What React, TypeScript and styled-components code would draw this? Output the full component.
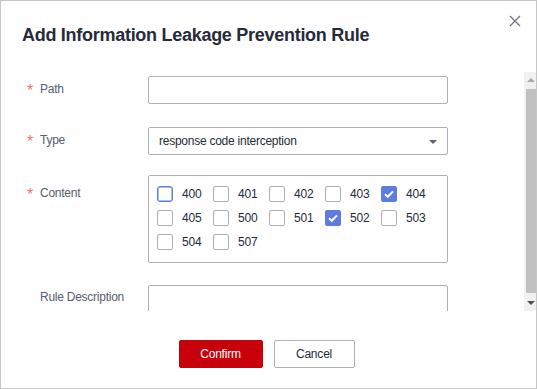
import React from 'react'
import styled, { createGlobalStyle, css } from 'styled-components'

const GlobalStyle = createGlobalStyle`
  html, body {
    margin: 0;
    padding: 0;
    background: #ffffff;
  }
  body {
    font-family: 'Liberation Sans', Arial, sans-serif;
  }
`

interface Code {
  code: string
  checked?: boolean
  focused?: boolean
}

const codes: Code[] = [
  { code: '400', focused: true },
  { code: '401' },
  { code: '402' },
  { code: '403' },
  { code: '404', checked: true },
  { code: '405' },
  { code: '500' },
  { code: '501' },
  { code: '502', checked: true },
  { code: '503' },
  { code: '504' },
  { code: '507' },
]

const CloseIcon: React.FC = () => (
  <svg width="12" height="12" viewBox="0 0 12 12">
    <path d="M1 1L11 11M11 1L1 11" stroke="#71757f" strokeWidth="1.3" fill="none" />
  </svg>
)

const CheckIcon: React.FC = () => (
  <svg width="16" height="16" viewBox="0 0 16 16">
    <path d="M4 8.2L6.8 10.8L12 5.4" stroke="#ffffff" strokeWidth="2" fill="none" />
  </svg>
)

const App: React.FC = () => {
  return (
    <>
      <GlobalStyle />
      <Dialog>
        <Header>
          <Title>Add Information Leakage Prevention Rule</Title>
          <CloseButton aria-label="close">
            <CloseIcon />
          </CloseButton>
        </Header>
        <Body>
          <Content>
            <FormRow $gap={23}>
              <Label $required>Path</Label>
              <TextInput />
            </FormRow>
            <FormRow $gap={20}>
              <Label $required>Type</Label>
              <Select>
                <span>response code interception</span>
                <Caret />
              </Select>
            </FormRow>
            <FormRow $gap={22}>
              <Label $required $shift={5}>
                Content
              </Label>
              <CheckGroup>
                {codes.map((c) => (
                  <CheckItem key={c.code}>
                    <Box $checked={c.checked} $focused={c.focused}>
                      {c.checked && <CheckIcon />}
                    </Box>
                    {c.code}
                  </CheckItem>
                ))}
              </CheckGroup>
            </FormRow>
            <FormRow $gap={0}>
              <Label $shift={-1}>Rule Description</Label>
              <TextArea />
            </FormRow>
          </Content>
          <ScrollBar>
            <ScrollArrow $dir="up" />
            <Thumb />
            <ScrollArrow $dir="down" />
          </ScrollBar>
        </Body>
        <Footer>
          <Button $primary>Confirm</Button>
          <Button>Cancel</Button>
        </Footer>
      </Dialog>
    </>
  )
}

const Dialog = styled.div`
  width: 537px;
  height: 389px;
  box-sizing: border-box;
  border: 1px solid #c6c6c6;
  background: #ffffff;
  display: flex;
  flex-flow: column;
  overflow: hidden;
`

const Header = styled.div`
  height: 71px;
  flex-shrink: 0;
  display: flex;
  align-items: flex-start;
  justify-content: space-between;
  padding: 14px 15px 0 21px;
  box-sizing: border-box;
`

const Title = styled.h2`
  margin: 8px 0 0;
  font-size: 18px;
  line-height: 24px;
  font-weight: bold;
  letter-spacing: -0.28px;
  color: #252b3a;
`

const CloseButton = styled.button`
  border: none;
  background: none;
  padding: 0;
  width: 12px;
  height: 12px;
  display: flex;
  cursor: pointer;
`

const Body = styled.div`
  height: 239px;
  flex-shrink: 0;
  display: flex;
`

const Content = styled.div`
  flex: 1;
  overflow: hidden;
  padding: 4px 0 0 25px;
  box-sizing: border-box;
`

const ScrollBar = styled.div`
  width: 12px;
  flex-shrink: 0;
  display: flex;
  flex-flow: column;
  background: #f1f1f1;
`

const ScrollArrow = styled.div<{ $dir: 'up' | 'down' }>`
  height: 17px;
  flex-shrink: 0;
  display: flex;
  align-items: center;
  justify-content: center;
  padding-left: 1px;

  &::after {
    content: '';
    width: 0;
    height: 0;
    border-left: 4px solid transparent;
    border-right: 4px solid transparent;
    ${({ $dir }) =>
      $dir === 'up'
        ? css`
            border-bottom: 4px solid #a8a8a8;
            margin-top: -2px;
          `
        : css`
            border-top: 4px solid #505050;
            margin-top: 1px;
          `}
  }
`

const Thumb = styled.div`
  flex: 1;
  margin: 0 0 1px 2px;
  background: #c1c1c1;
`

const FormRow = styled.div<{ $gap: number }>`
  display: grid;
  grid-template-columns: 122px 300px;
  align-items: start;
  margin-bottom: ${({ $gap }) => $gap}px;
`

const Label = styled.label<{ $required?: boolean; $shift?: number }>`
  display: flex;
  align-items: center;
  font-size: 12px;
  line-height: 26px;
  letter-spacing: -0.25px;
  color: #575d6c;
  margin-top: ${({ $shift }) => $shift ?? 0}px;

  &::before {
    content: '${({ $required }) => ($required ? '*' : '')}';
    width: 14px;
    padding-left: 1px;
    box-sizing: border-box;
    font-size: 16px;
    line-height: 16px;
    padding-top: 3px;
    color: #f66f6a;
  }
`

const fieldBase = css`
  width: 300px;
  box-sizing: border-box;
  border: 1px solid #adb0b8;
  border-radius: 2px;
  background: #ffffff;
`

const TextInput = styled.div`
  ${fieldBase};
  height: 28px;
`

const Select = styled.div`
  ${fieldBase};
  height: 28px;
  display: flex;
  align-items: center;
  justify-content: space-between;
  padding: 0 10px;
  font-size: 12px;
  letter-spacing: -0.25px;
  color: #252b3a;
`

const Caret = styled.span`
  width: 0;
  height: 0;
  border-left: 4px solid transparent;
  border-right: 4px solid transparent;
  border-top: 4px solid #5e6170;
  margin-top: 1px;
`

const CheckGroup = styled.div`
  ${fieldBase};
  height: 88px;
  padding: 10px 0 0 8px;
  display: grid;
  grid-template-columns: repeat(5, 56px);
  grid-auto-rows: 16px;
  row-gap: 8px;
`

const CheckItem = styled.div`
  display: flex;
  align-items: center;
  gap: 9px;
  font-size: 12px;
  letter-spacing: -0.2px;
  color: #252b3a;
`

const Box = styled.span<{ $checked?: boolean; $focused?: boolean }>`
  width: 16px;
  height: 16px;
  box-sizing: border-box;
  border-radius: 2px;
  display: flex;
  border: 1px solid ${({ $checked, $focused }) => ($checked || $focused ? '#5e7ce0' : '#adb0b8')};
  background: ${({ $checked }) => ($checked ? '#5e7ce0' : '#ffffff')};
  ${({ $focused }) =>
    $focused &&
    css`
      box-shadow: inset 0 0 0 0.5px #5e7ce0;
      border-radius: 3px;
    `}
  svg {
    margin: -1px;
  }
`

const TextArea = styled.div`
  ${fieldBase};
  height: 32px;
`

const Footer = styled.div`
  flex: 1;
  display: flex;
  justify-content: center;
  gap: 11px;
  padding: 29px 4px 0 0;
  box-sizing: border-box;
`

const Button = styled.button<{ $primary?: boolean }>`
  height: 28px;
  width: ${({ $primary }) => ($primary ? 84 : 81)}px;
  box-sizing: border-box;
  border-radius: 2px;
  font-family: 'Liberation Sans', Arial, sans-serif;
  font-size: 12px;
  letter-spacing: -0.2px;
  cursor: pointer;
  border: 1px solid ${({ $primary }) => ($primary ? '#c7000b' : '#adb0b8')};
  background: ${({ $primary }) => ($primary ? '#c7000b' : '#ffffff')};
  color: ${({ $primary }) => ($primary ? '#ffffff' : '#252b3a')};
`

export default App
